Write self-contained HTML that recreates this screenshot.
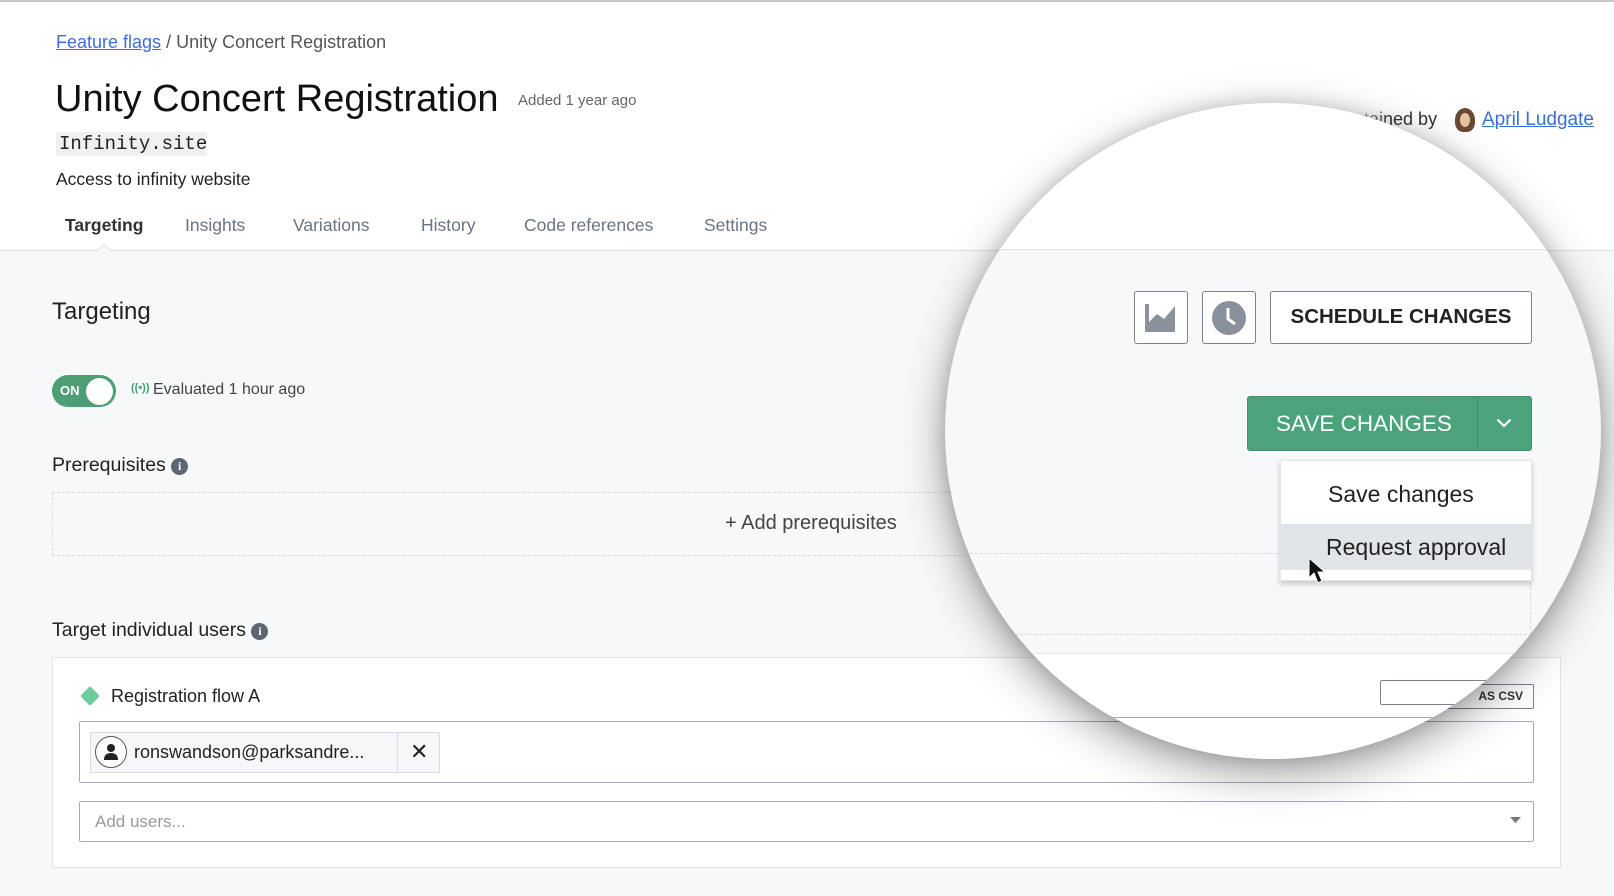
<!DOCTYPE html>
<html><head><meta charset="utf-8">
<style>
*{box-sizing:border-box;margin:0;padding:0}
html,body{width:1614px;height:896px;overflow:hidden}
body{position:relative;font-family:"Liberation Sans",Arial,sans-serif;color:#222;background:#f7f8fa}
.a{position:absolute;white-space:nowrap}
.top{position:absolute;left:0;top:0;width:1614px;height:251px;background:#fff;border-top:2px solid #c8c8c8;border-bottom:1px solid #dcdfe4}
.tab{font-size:17.5px;color:#6b7280;top:215px}
.info{display:inline-block;width:17px;height:17px;border-radius:50%;background:#5f6673;color:#fff;font-size:12px;font-weight:bold;text-align:center;line-height:17px;vertical-align:1px;font-family:"Liberation Serif",serif}
.circ{position:absolute;left:945px;top:103px;width:656px;height:656px;border-radius:50%;overflow:hidden;background:#f7f8fa;box-shadow:0 14px 45px rgba(0,0,0,.38),0 0 18px rgba(0,0,0,.15)}
.in{position:absolute;left:-945px;top:-103px;width:1614px;height:896px}
.btn{position:absolute;border:1.5px solid #7c828c;border-radius:3px;background:#fff}
</style></head><body>
<div class="top"></div>
<div class="a" style="left:56px;top:32px;font-size:18px;color:#555"><span style="color:#3a70d6;text-decoration:underline">Feature flags</span> / Unity Concert Registration</div>
<div class="a" style="left:55px;top:78px;font-size:38px;color:#111">Unity Concert Registration</div>
<div class="a" style="left:518px;top:92px;font-size:15px;color:#666">Added 1 year ago</div>
<div class="a" style="left:56px;top:132px;width:151px;height:24px;background:#f0f0f0"></div>
<div class="a" style="left:59px;top:133px;font-size:19px;font-family:'Liberation Mono',monospace;color:#222">Infinity.site</div>
<div class="a" style="left:56px;top:169px;font-size:17.5px;color:#222">Access to infinity website</div>
<div class="a tab" style="left:65px;color:#333;font-weight:600">Targeting</div>
<div class="a tab" style="left:185px">Insights</div>
<div class="a tab" style="left:293px">Variations</div>
<div class="a tab" style="left:421px">History</div>
<div class="a tab" style="left:524px">Code references</div>
<div class="a tab" style="left:704px">Settings</div>
<svg class="a" style="left:96px;top:243px" width="16" height="9"><path d="M0 8.5 L8 1 L16 8.5" fill="#f7f8fa" stroke="#dcdfe4"/></svg>

<div class="a" style="left:1325px;top:109px;font-size:18px;color:#333">Maintained by</div>
<div class="a" style="left:1300px;top:100px;width:90px;height:40px;background:linear-gradient(90deg,#fff 0,#fff 55%,rgba(255,255,255,0) 100%)"></div>
<div class="a" style="left:1455px;top:108px;width:20px;height:24px;border-radius:50% 50% 40% 40%;background:#6b4a33"></div>
<div class="a" style="left:1460px;top:113px;width:10px;height:14px;border-radius:50%;background:#e6c2a4"></div>
<div class="a" style="left:1482px;top:109px;font-size:19px;color:#3a70d6;text-decoration:underline">April Ludgate</div>

<div class="a" style="left:52px;top:298px;font-size:24px;color:#222">Targeting</div>
<div class="a" style="left:52px;top:375px;width:64px;height:32px;border-radius:16px;background:#4d9e74"></div>
<div class="a" style="left:60px;top:383px;font-size:13px;color:#fff;font-weight:bold">ON</div>
<div class="a" style="left:86px;top:378px;width:27px;height:27px;border-radius:50%;background:#fff"></div>
<div class="a" style="left:131px;top:382px;font-size:11px;color:#3fa073;font-weight:bold">((•))</div>
<div class="a" style="left:153px;top:381px;font-size:16px;color:#444">Evaluated 1 hour ago</div>

<div class="a" style="left:52px;top:454px;font-size:19.5px;color:#222;font-weight:500">Prerequisites <span class="info">i</span></div>
<div class="a" style="left:52px;top:492px;width:1480px;height:64px;border:1.5px dashed #d4d7dc"></div>
<div class="a" style="left:725px;top:512px;font-size:20px;color:#444">+ Add prerequisites</div>

<div class="a" style="left:52px;top:619px;font-size:19.5px;color:#222">Target individual users <span class="info">i</span></div>
<div class="a" style="left:52px;top:657px;width:1509px;height:211px;background:#fff;border:1.5px solid #e1e3e7"></div>
<div class="a" style="left:83px;top:689px;width:14px;height:14px;background:#6ccc9c;transform:rotate(45deg);border-radius:2px"></div>
<div class="a" style="left:111px;top:686px;font-size:18px;color:#222">Registration flow A</div>
<div class="a" style="left:1380px;top:684px;width:154px;height:25px;border:1.5px solid #7c828c;border-radius:2px;background:#fff;font-size:12px;font-weight:bold;color:#333;text-align:right;padding:4px 10px 0 0">AS CSV</div>
<div class="a" style="left:79px;top:721px;width:1455px;height:62px;border:1.5px solid #a6abb3;border-radius:2px;background:#fff"></div>
<div class="a" style="left:90px;top:732px;width:350px;height:41px;border:1px solid #d8dbe0;background:#f6f7f9;border-radius:2px"></div>
<div class="a" style="left:397px;top:732px;width:1px;height:41px;background:#d8dbe0"></div>
<div class="a" style="left:95px;top:736px;width:32px;height:32px;border-radius:50%;border:1.5px solid #555;background:#fff"></div>
<svg class="a" style="left:101px;top:742px" width="20" height="20"><circle cx="10" cy="6" r="4" fill="#222"/><path d="M3 18 Q3 11 10 11 Q17 11 17 18Z" fill="#222"/></svg>
<div class="a" style="left:134px;top:742px;font-size:18px;color:#222">ronswandson@parksandre...</div>
<div class="a" style="left:410px;top:739px;font-size:22px;color:#222">✕</div>
<div class="a" style="left:79px;top:801px;width:1455px;height:41px;border:1.5px solid #a6abb3;border-radius:2px;background:#fff"></div>
<div class="a" style="left:95px;top:812px;font-size:17px;color:#999">Add users...</div>
<svg class="a" style="left:1510px;top:817px" width="11" height="7"><path d="M0 0H11L5.5 6Z" fill="#777"/></svg>

<div class="circ"><div class="in">
  <div class="a" style="left:0;top:0;width:1614px;height:250px;background:#fff;border-bottom:1px solid #dcdfe4"></div>
  <div class="btn" style="left:1134px;top:291px;width:54px;height:53px"></div>
  <svg class="a" style="left:1144px;top:302px" width="34" height="32"><path d="M1 2 L5 2 L5 20 L13 12 L20 17 L31 4 L31 30 L1 30Z" fill="#8a919c"/></svg>
  <div class="btn" style="left:1202px;top:291px;width:54px;height:53px"></div>
  <svg class="a" style="left:1211px;top:300px" width="36" height="36"><circle cx="18" cy="18" r="17" fill="#8a919c"/><path d="M17 8 V19 L24 24" stroke="#fff" stroke-width="3" fill="none"/></svg>
  <div class="btn" style="left:1270px;top:291px;width:262px;height:53px;font-size:20.5px;font-weight:bold;color:#222;text-align:center;line-height:50px">SCHEDULE CHANGES</div>
  <div class="a" style="left:1247px;top:396px;width:285px;height:55px;background:#4aa37b;border:1px solid #3f9269;border-radius:3px"></div>
  <div class="a" style="left:1477px;top:396px;width:1px;height:55px;background:#3a8a62"></div>
  <div class="a" style="left:1276px;top:411px;font-size:22.5px;color:#fff">SAVE CHANGES</div>
  <svg class="a" style="left:1496px;top:418px" width="16" height="10"><path d="M1.5 1.5 L8 8 L14.5 1.5" stroke="#fff" stroke-width="2.2" fill="none"/></svg>
  <div class="a" style="left:900px;top:553px;width:632px;height:0;border-top:1.5px dashed #d4d7dc"></div>
  <div class="a" style="left:900px;top:634px;width:632px;height:0;border-top:1.5px dashed #d4d7dc"></div>
  <div class="a" style="left:1530px;top:553px;width:0;height:81px;border-left:1.5px dashed #d4d7dc"></div>
  <div class="a" style="left:1280px;top:460px;width:252px;height:121px;background:#fff;border:1px solid #e3e5e9;box-shadow:0 3px 5px rgba(0,0,0,.2)"></div>
  <div class="a" style="left:1281px;top:524px;width:250px;height:46px;background:#e1e4e8"></div>
  <div class="a" style="left:1328px;top:481px;font-size:23px;color:#222">Save changes</div>
  <div class="a" style="left:1326px;top:534px;font-size:23px;color:#222">Request approval</div>
  <svg class="a" style="left:1307px;top:556px" width="22" height="30"><path d="M2 2 L2 22 L7 17 L11 27 L15 25 L11 16 L18 16Z" fill="#111" stroke="#fff" stroke-width="1"/></svg>
  <div class="a" style="left:800px;top:653px;width:761px;height:260px;background:#fff;border:1.5px solid #e1e3e7"></div>
  <div class="a" style="left:1380px;top:680px;width:155px;height:25px;border:1.5px solid #7c828c;border-radius:2px;background:#fff;font-size:12px;font-weight:bold;color:#333;text-align:right;padding:4px 10px 0 0">AS CSV</div>
  <div class="a" style="left:800px;top:717px;width:734px;height:62px;border:1.5px solid #a6abb3;border-radius:2px;background:#fff"></div>
</div></div>
</body></html>
